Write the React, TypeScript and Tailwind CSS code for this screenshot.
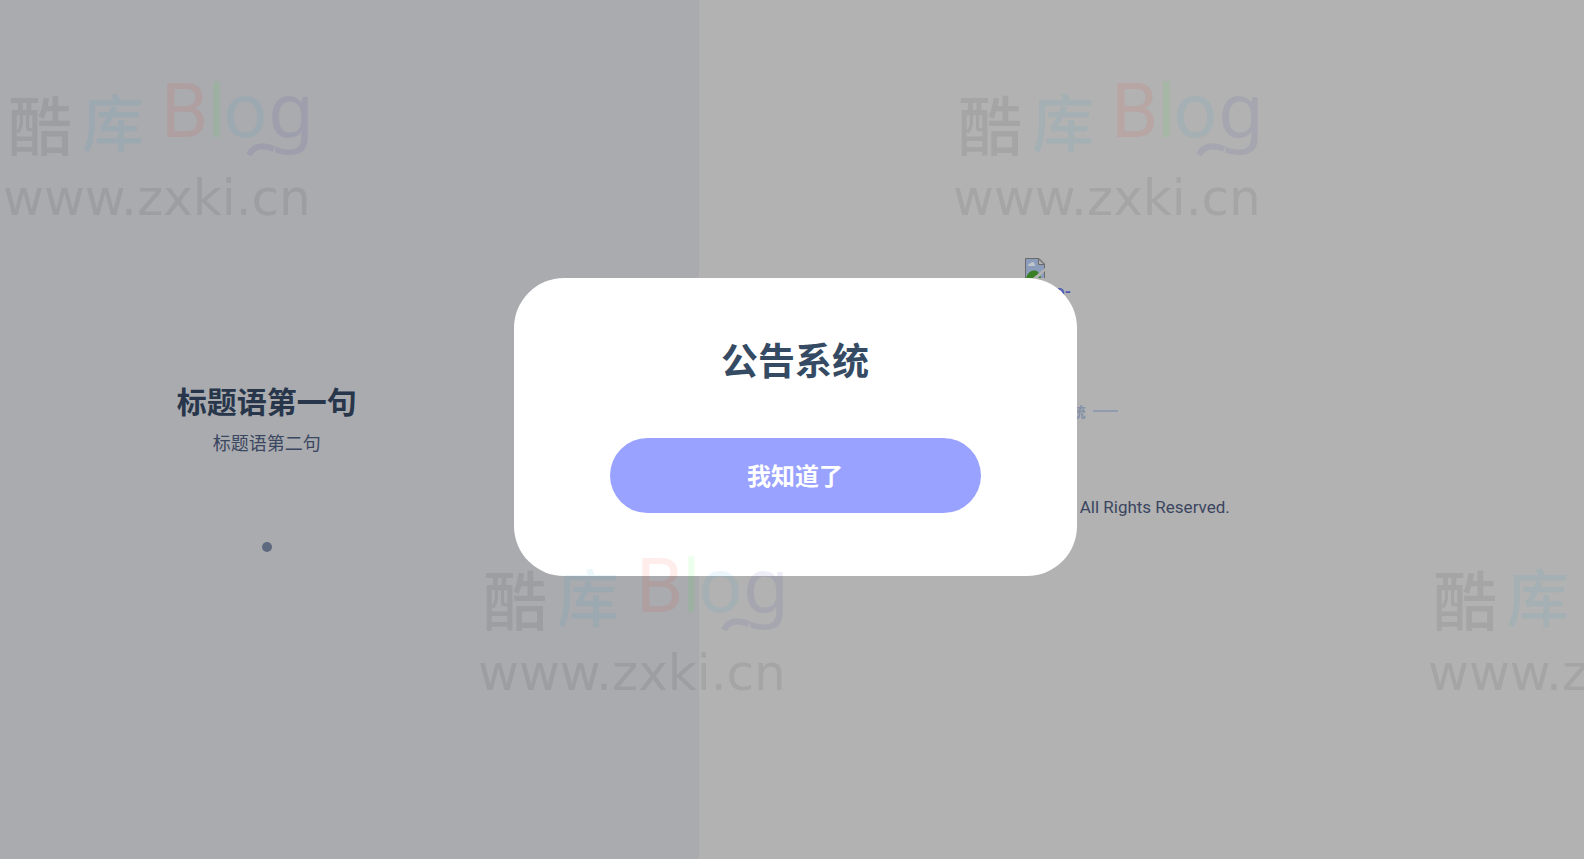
import React from "react";

const tiles = [
  { key: "top-left", place: "left-0 top-[40px]" },
  { key: "top-right", place: "left-[950px] top-[40px]" },
  { key: "bottom-left", place: "left-[475px] top-[515px]" },
  { key: "bottom-right", place: "left-[1425px] top-[515px]" },
];

const cjk = "font-['Noto_Sans_CJK_SC',sans-serif]";

const Watermark = ({ place }: { place: string }) => (
  <svg
    viewBox="0 -30 320 200"
    className={`absolute h-[200px] w-[320px] ${place}`}
    fontFamily="'Noto Sans', sans-serif"
  >
    <g fontFamily="'Noto Sans CJK SC', sans-serif" fontWeight="500">
      <text x="8" y="80" fontSize="64" fill="#101008" fillOpacity="0.08">酷</text>
      <text x="82" y="77" fontSize="62" fill="#0096d2" fillOpacity="0.08">库</text>
    </g>
    <text x="161" y="67" fontSize="76" fontFamily="Roboto, sans-serif" fill="#f01400" fillOpacity="0.08">
      B
    </text>
    <text x="207" y="67" fontSize="73" fill="#0f0" fillOpacity="0.07">l</text>
    <text x="223" y="67" fontSize="74" fill="#0096d2" fillOpacity="0.08">o</text>
    <text x="268" y="67" fontSize="75" fill="#1e1e96" fillOpacity="0.08">g</text>
    <path d="M249 85C254 74 264 75 274 79" fill="none" stroke="#1e1e96" strokeOpacity="0.08" strokeWidth="6" />
    <text x="3" y="145" fontSize="50" fontFamily="'DejaVu Sans', sans-serif" fill="#101008" fillOpacity="0.08">
      www.zxki.cn
    </text>
  </svg>
);

const BrokenImage = () => (
  <svg viewBox="0 0 20 20" className="h-5 w-5" aria-hidden="true">
    <path d="M0.5 20V0.5H14L19.5 6V20" fill="#8c9dbb" stroke="#6b6b6b" />
    <path d="M3 8C3 6 5 5 6 5C7 3 10 4 10 8Z" fill="#c0c4cc" />
    <path d="M1 20C3 14 6 12.500 10 12.500C13 13 15 16 16 20Z" fill="#387f26" />
    <path d="M8 20L20 10V13L13 20Z" fill="#b2b2b2" />
    <path d="M13.500 1V6.500H19.500Z" fill="#b2b2b2" stroke="#6b6b6b" />
  </svg>
);

const Intro = () => (
  <section className="flex w-[44.1%] flex-col items-center justify-center bg-[#aaabaf] pr-[165px] pt-[70px]">
    <h1 className={`text-[30px] font-bold leading-[44px] text-[#27364a] ${cjk}`}>标题语第一句</h1>
    <p className={`mt-1 text-lg leading-[32px] text-[#3a4760] ${cjk}`}>标题语第二句</p>
    <button type="button" aria-label="第一页" className="mt-[84px] h-[10px] w-[10px] rounded-full bg-[#5d697e]" />
  </section>
);

const LoginPanel = () => (
  <section className="flex flex-1 flex-col items-center bg-[#b2b2b2] pr-[187px] pt-[258px]">
    <a href="#home" className="block w-[46px] text-lg font-medium leading-6 text-[#4f5bb5]">
      <BrokenImage />
      <span className="mt-[2px] block text-right">logo-</span>
    </a>
    <div className="mt-[95px] flex w-[140px] items-center gap-[7px] text-[#8490a6]">
      <span className="h-[2px] w-[25px] bg-[#929cb0]" />
      <span className={`flex-1 text-right text-sm font-bold leading-6 ${cjk}`}>公告系统</span>
      <span className="h-[2px] w-[25px] bg-[#929cb0]" />
    </div>
    <footer className="mt-[72px] w-[364px] text-right text-[17px] leading-6 text-[#3b4560]">
      Copyright © 2023 All Rights Reserved.
    </footer>
  </section>
);

const Notice = () => (
  <div className="absolute inset-0 flex items-center justify-center pb-[6px] pl-[6px]">
    <div
      role="dialog"
      aria-labelledby="notice-title"
      className={`w-[563px] rounded-[50px] bg-white px-24 pb-[63px] pt-[53px] text-center ${cjk}`}
    >
      <h2 id="notice-title" className="text-[37px] font-bold leading-[56px] text-[#354a63]">
        公告系统
      </h2>
      <button
        type="button"
        className="mt-[51px] h-[75px] w-full rounded-full bg-[#99a2ff] text-2xl font-bold text-white"
      >
        我知道了
      </button>
    </div>
  </div>
);

const App = () => {
  return (
    <div className="relative flex min-h-screen overflow-hidden font-[Roboto,sans-serif]">
      <Intro />
      <LoginPanel />
      <Notice />
      {/* Watermark layer */}
      <div className="pointer-events-none absolute inset-0 overflow-hidden">
        {tiles.map((tile) => (
          <Watermark key={tile.key} place={tile.place} />
        ))}
      </div>
    </div>
  );
};

export default App;
